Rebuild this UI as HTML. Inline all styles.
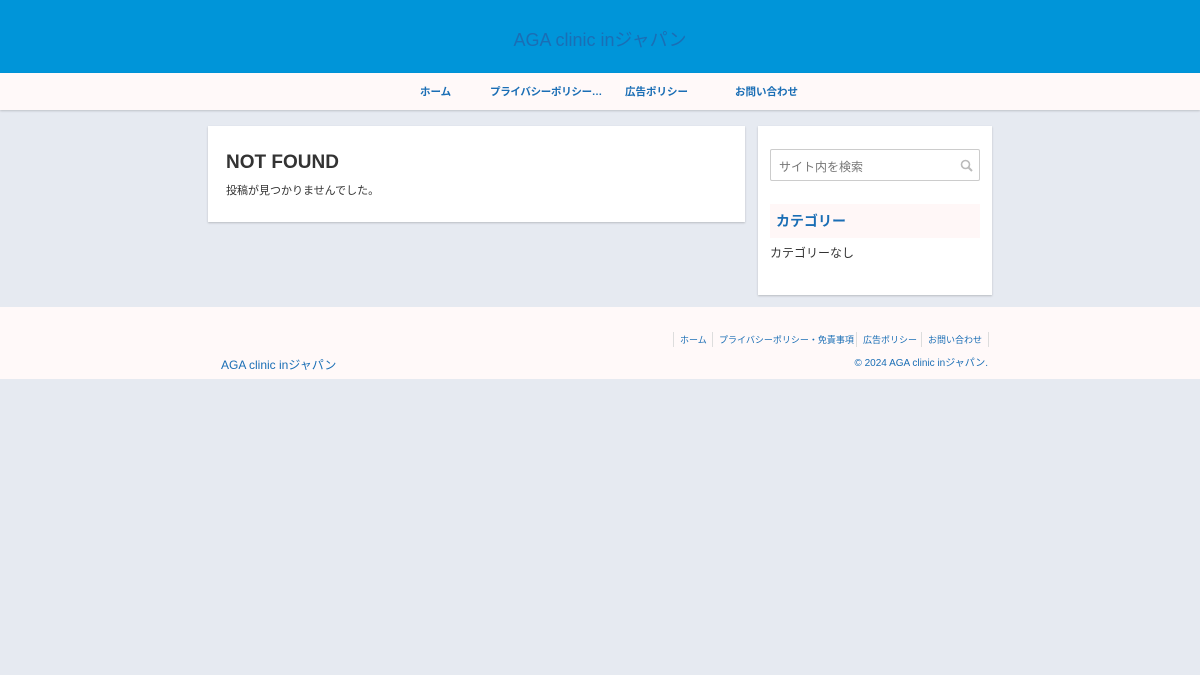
<!DOCTYPE html>
<html><head><meta charset="utf-8"><style>
*{margin:0;padding:0;box-sizing:border-box}
body{width:1200px;height:675px;background:#e6eaf1;font-family:"Liberation Sans","Noto Sans CJK JP",sans-serif;position:relative;overflow:hidden}
.hd{position:absolute;left:0;top:0;width:1200px;height:73px;background:#0095d9}
.hd .t{position:absolute;left:0;width:1200px;top:26px;text-align:center;font-size:18px;color:#1a6eb5}
.nav{position:absolute;left:0;top:73px;width:1200px;height:37px;background:#fff9f9;box-shadow:0 1px 2px rgba(0,0,0,.18)}
.nav span{position:absolute;top:11px;font-size:10.5px;font-weight:bold;color:#1a6eb5}
.main{position:absolute;left:208px;top:126px;width:537px;height:96px;background:#fff;box-shadow:0 1px 2px rgba(0,0,0,.2)}
.main h1{position:absolute;left:18px;top:26px;font-size:19px;color:#333}
.main p{position:absolute;left:18px;top:56px;font-size:11px;color:#333}
.side{position:absolute;left:758px;top:126px;width:234px;height:169px;background:#fff;box-shadow:0 1px 2px rgba(0,0,0,.2)}
.srch{position:absolute;left:12px;top:23px;width:210px;height:32px;border:1px solid #ccc;border-radius:2px;font-size:12px;color:#777;padding:8px 8px}
.cat{position:absolute;left:12px;top:78px;width:210px;height:34px;background:#fff7f7;font-size:14px;font-weight:bold;color:#1a6eb5;padding:7px 6px}
.none{position:absolute;left:12px;top:118px;font-size:12px;color:#333}
.ft{position:absolute;left:0;top:307px;width:1200px;height:72px;background:#fff9f9}
.fl{position:absolute;top:25px;font-size:9px;color:#1a6eb5;border-left:1px solid #ddd;padding:1px 6px;height:15px}
</style></head><body>
<div class="hd"><div class="t">AGA clinic inジャパン</div></div>
<div class="nav"><span style="left:420px">ホーム</span><span style="left:490px;letter-spacing:-0.3px">プライバシーポリシー…</span><span style="left:625px">広告ポリシー</span><span style="left:735px">お問い合わせ</span></div>
<div class="main"><h1>NOT FOUND</h1><p>投稿が見つかりませんでした。</p></div>
<div class="side"><div class="srch">サイト内を検索
<svg style="position:absolute;right:6px;top:9px" width="13" height="13" viewBox="0 0 13 13"><circle cx="5.5" cy="5.5" r="4" fill="none" stroke="#bbb" stroke-width="1.6"/><line x1="8.5" y1="8.5" x2="12" y2="12" stroke="#bbb" stroke-width="2"/></svg></div>
<div class="cat">カテゴリー</div><div class="none">カテゴリーなし</div></div>
<div class="ft">
<span class="fl" style="left:673px">ホーム</span><span class="fl" style="left:712px">プライバシーポリシー・免責事項</span><span class="fl" style="left:856px">広告ポリシー</span><span class="fl" style="left:921px;border-right:1px solid #ddd">お問い合わせ</span>
<div style="position:absolute;right:212px;top:47px;font-size:10px;color:#1a6eb5">© 2024 AGA clinic inジャパン.</div>
<div style="position:absolute;left:221px;top:49px;font-size:12px;color:#1a6eb5">AGA clinic inジャパン</div>
</div>
</body></html>
